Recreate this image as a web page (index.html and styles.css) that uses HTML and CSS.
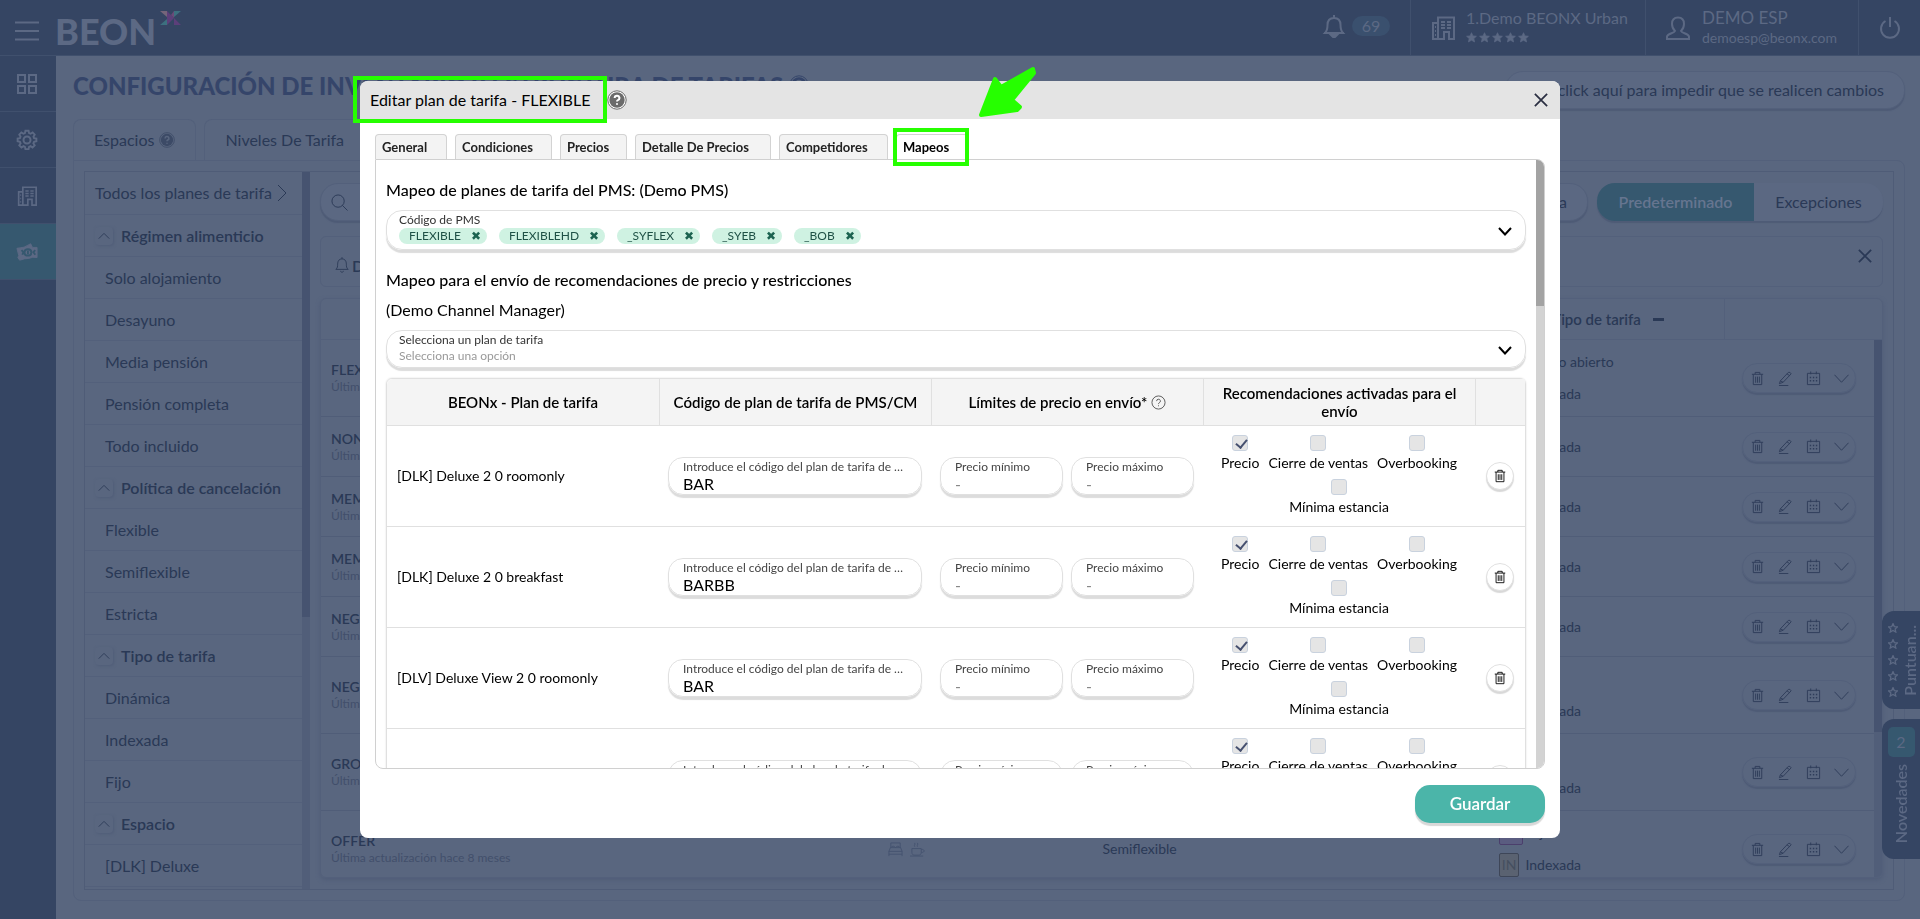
FILE: index.html
```html
<!DOCTYPE html>
<html lang="es">
<head>
<meta charset="utf-8">
<title>Editar plan de tarifa - FLEXIBLE</title>
<link rel="stylesheet" href="styles.css">
</head>
<body>
<svg class="sprite" aria-hidden="true">
  <symbol id="i-trash" viewBox="0 0 16 16"><path d="M2 3.5h12M5.5 3.500V1.500h5v2M3.500 3.500v11h9v-11M6 6v6.500M8 6v6.500M10 6v6.500"/></symbol>
  <symbol id="i-pen" viewBox="0 0 16 16"><path d="M2.500 10.500L11 1.500q2-.8 3 1.500L5.500 12 1.500 13.500zM2.500 10.500l3 1.500M9.500 3l3 2M1 15.500h10"/></symbol>
  <symbol id="i-cal" viewBox="0 0 16 16"><path d="M1.500 2.500h13v12h-13zM5 .5v3M11 .5v3"/><path d="M4 7h1.500M7.300 7h1.500M10.500 7H12M4 10.500h1.500M7.300 10.500h1.500M10.500 10.500H12" stroke-width="1.600"/></symbol>
  <symbol id="i-down" viewBox="0 0 16 16"><path d="M.5 4l7.500 8 7.500-8"/></symbol>
  <symbol id="i-up" viewBox="0 0 16 16"><path d="M2 11l6-6 6 6"/></symbol>
  <symbol id="i-right" viewBox="0 0 10 18"><path d="M1 1l8 8-8 8"/></symbol>
  <symbol id="i-close" viewBox="0 0 16 16"><path d="M1 1l14 14M15 1L1 15"/></symbol>
  <symbol id="i-hotel" viewBox="0 0 24 24"><path d="M7 23V1.500h16V23h-5v-7h-5v7zM7 7H2v16h5M4 11h1M4 15h1M4 19h1M10 6h4M16 6h4M10 9h4M16 9h4M10 12h4M16 12h4"/></symbol>
  <symbol id="i-star" viewBox="0 0 16 16"><path d="M8 1l2.100 4.700 5.100.5-3.800 3.400 1.100 5L8 12l-4.500 2.600 1.100-5L.8 6.200l5.100-.5z"/></symbol>
  <symbol id="i-help" viewBox="0 0 20 20"><circle class="help-ring" cx="10" cy="10" r="9.200"/><circle class="help-disc" cx="10" cy="10" r="7.700"/><path class="help-mark" d="M7.600 8a2.400 2.300 0 1 1 3.300 2.100c-.7.3-.9.700-.9 1.500M10 13.300v1.500"/></symbol>
</svg>

<header class="topbar">
  <button class="icon-button menu" aria-label="Menú"><svg viewBox="0 0 24 20"><path d="M0 1.500h24M0 10h24M0 18.500h24" stroke-width="2"/></svg></button>
  <div class="brand"><span>BEON</span>
    <svg class="brand-x" viewBox="0 0 21 14"><path fill="#75657a" d="M0 0h7v6z"/><path fill="#5c3f7a" d="M7 0l7 7-7 7zM14 7l7 7h-7z"/><path fill="#3c707f" d="M21 0l-7 6V0zM0 14l7-6v6z"/><path fill="#6b4a78" d="M14 0v7l-3-3z"/></svg>
  </div>
  <div class="top-group alerts">
    <svg class="line" viewBox="0 0 22 24"><path d="M2 19c2-2 2.500-4 2.500-8 0-4 2-7 6.500-7s6.500 3 6.500 7c0 4 .5 6 2.500 8zM11 4V1M1 19h20"/><path d="M8 21h6l-3 3z" fill="currentColor"/></svg>
    <span class="count">69</span>
  </div>
  <div class="top-group hotel">
    <svg class="line"><use href="#i-hotel"/></svg>
    <div><div class="top-name">1.Demo BEONX Urban</div>
      <div class="stars"><svg><use href="#i-star"/></svg><svg><use href="#i-star"/></svg><svg><use href="#i-star"/></svg><svg><use href="#i-star"/></svg><svg><use href="#i-star"/></svg></div></div>
  </div>
  <div class="top-group user">
    <svg class="line" viewBox="0 0 24 24"><path d="M9 15c-2-2-3-4-3-7 0-4 2-6.500 6-6.500S18 4 18 8c0 3-1 5-3 7 1 2.500 7 2 8 5.500V23H1v-2.500C2 17 8 17.500 9 15z"/></svg>
    <div><div class="top-name demo">DEMO ESP</div><div class="top-mail">demoesp@beonx.com</div></div>
  </div>
  <button class="icon-button top-group power" aria-label="Salir"><svg viewBox="0 0 22 22"><path d="M6.500 4a9 9 0 1 0 9 0M11 0v10"/></svg></button>
</header>

<div class="shell">
  <nav class="rail">
    <a href="#" aria-label="Panel"><svg viewBox="0 0 20 20"><path d="M1 1h7v7H1zM12 1h7v7h-7zM1 12h7v7H1zM12 12h7v7h-7z"/></svg></a>
    <a href="#" aria-label="Ajustes"><svg viewBox="0 0 20 20"><circle cx="10" cy="10" r="3.500"/><path d="M8.300 1h3.400l.5 2.500 1.600.7 2.200-1.400 2.200 2.400-1.300 2.100.6 1.500 2.500.5v2.900l-2.500.6-.7 1.600 1.400 2.100-2.300 2.300-2.100-1.400-1.600.7-.5 2.400H8.300l-.5-2.400-1.600-.7-2.100 1.400-2.300-2.300 1.400-2.100-.7-1.600L0 12.200V9.300l2.500-.5.600-1.500-1.300-2.100L4 2.800l2.200 1.400 1.600-.7z" transform="translate(.6 -.2) scale(.94)"/></svg></a>
    <a href="#" aria-label="Hotel"><svg><use href="#i-hotel"/></svg></a>
    <a href="#" class="active" aria-label="Tarifas"><svg viewBox="0 0 24 20"><path fill="currentColor" d="M1 6q8 0 15-5l2 4h5v11q-5-1-9 1-5 0-10 2l-2-3 1-2z"/><path class="cut" d="M13 7c-5 0-5 7 0 7s5-7 0-7zM13 8.500v4M6 8l2 2-1 3M21 8l-2 2 2 3"/></svg></a>
  </nav>

  <main class="page">
    <div class="page-head">
      <h1>CONFIGURACIÓN DE INVENTARIO Y ESTRUCTURA DE TARIFAS <svg class="help"><use href="#i-help"/></svg></h1>
      <button class="pill lock">Haz click aquí para impedir que se realicen cambios</button>
    </div>
    <div class="page-tabs">
      <button class="page-tab">Espacios <svg class="help"><use href="#i-help"/></svg></button>
      <button class="page-tab">Niveles De Tarifa</button>
    </div>
    <section class="board">
      <div class="board-inner">
        <aside class="tree">
          <ul>
            <li class="all">Todos los planes de tarifa <svg><use href="#i-right"/></svg></li>
            <li class="group"><span class="fold"><svg><use href="#i-up"/></svg></span>Régimen alimenticio</li>
            <li>Solo alojamiento</li><li>Desayuno</li><li>Media pensión</li><li>Pensión completa</li><li>Todo incluido</li>
            <li class="group"><span class="fold"><svg><use href="#i-up"/></svg></span>Política de cancelación</li>
            <li>Flexible</li><li>Semiflexible</li><li>Estricta</li>
            <li class="group"><span class="fold"><svg><use href="#i-up"/></svg></span>Tipo de tarifa</li>
            <li>Dinámica</li><li>Indexada</li><li>Fijo</li>
            <li class="group"><span class="fold"><svg><use href="#i-up"/></svg></span>Espacio</li>
            <li>[DLK] Deluxe</li><li></li>
          </ul>
          <div class="track"><div class="thumb tree-thumb"></div></div>
        </aside>
        <div class="plans">
          <div class="tools">
            <div class="pill search"><svg viewBox="0 0 18 18"><circle cx="7.500" cy="7.500" r="6.500"/><path d="M12 12l5.500 5.500"/></svg><input aria-label="Buscar" placeholder="Buscar"></div>
            <button class="pill add">Nueva tarifa</button>
            <div class="switch"><button class="on">Predeterminado</button><button>Excepciones</button></div>
          </div>
          <div class="notice"><span><svg class="bell" viewBox="0 0 16 18"><path d="M1 14c2-2 2-3 2-6 0-4 2-6 5-6s5 2 5 6c0 3 0 4 2 6zM8 2V0M6 16l2 1.500 2-1.500"/></svg>Derivadas</span><svg class="x"><use href="#i-close"/></svg></div>
          <div class="grid-box">
            <div class="grid-head"><span></span><span></span><span></span><span></span><span class="type-head">Tipo de tarifa <i></i></span><span class="last-head"></span></div>
            <div class="grid-body">
              <div class="grid-rows">
                <div class="plan tall"><div><b>FLEXIBLE</b><small>Última actualización</small></div><div></div><div></div><div></div><div class="types"><span><em class="fi">PA</em>Precio abierto</span><span><em>IN</em>Indexada</span></div><div class="acts"><svg><use href="#i-trash"/></svg><svg><use href="#i-pen"/></svg><svg><use href="#i-cal"/></svg><svg><use href="#i-down"/></svg></div></div>
                <div class="plan"><div><b>NON REF</b><small>Última actualización</small></div><div></div><div></div><div></div><div class="types"><span><em>IN</em>Indexada</span></div><div class="acts"><svg><use href="#i-trash"/></svg><svg><use href="#i-pen"/></svg><svg><use href="#i-cal"/></svg><svg><use href="#i-down"/></svg></div></div>
                <div class="plan"><div><b>MEMBER</b><small>Última actualización</small></div><div></div><div></div><div></div><div class="types"><span><em>IN</em>Indexada</span></div><div class="acts"><svg><use href="#i-trash"/></svg><svg><use href="#i-pen"/></svg><svg><use href="#i-cal"/></svg><svg><use href="#i-down"/></svg></div></div>
                <div class="plan"><div><b>MEMBER</b><small>Última actualización</small></div><div></div><div></div><div></div><div class="types"><span><em>IN</em>Indexada</span></div><div class="acts"><svg><use href="#i-trash"/></svg><svg><use href="#i-pen"/></svg><svg><use href="#i-cal"/></svg><svg><use href="#i-down"/></svg></div></div>
                <div class="plan"><div><b>NEGO</b><small>Última actualización</small></div><div></div><div></div><div></div><div class="types"><span><em>IN</em>Indexada</span></div><div class="acts"><svg><use href="#i-trash"/></svg><svg><use href="#i-pen"/></svg><svg><use href="#i-cal"/></svg><svg><use href="#i-down"/></svg></div></div>
                <div class="plan tall"><div><b>NEGO</b><small>Última actualización</small></div><div></div><div></div><div></div><div class="types"><span></span><span><em>IN</em>Indexada</span></div><div class="acts"><svg><use href="#i-trash"/></svg><svg><use href="#i-pen"/></svg><svg><use href="#i-cal"/></svg><svg><use href="#i-down"/></svg></div></div>
                <div class="plan tall"><div><b>GROUP</b><small>Última actualización</small></div><div></div><div></div><div></div><div class="types"><span></span><span><em>IN</em>Indexada</span></div><div class="acts"><svg><use href="#i-trash"/></svg><svg><use href="#i-pen"/></svg><svg><use href="#i-cal"/></svg><svg><use href="#i-down"/></svg></div></div>
                <div class="plan tall"><div><b>OFFER</b><small>Última actualización hace 8 meses</small></div>
                  <div class="meal"><svg viewBox="0 0 16 16"><path d="M3 6V1h10v5M3 6c1-2 4-2 5 0 1-2 4-2 5 0M2.500 6L1 10v5M13.500 6l1.500 4v5M1 10h14M1 13h14M2.500 6h11"/></svg><svg viewBox="0 0 16 16"><path d="M2 7h10v4c0 2-1 3-3 3H5c-2 0-3-1-3-3zM12 8c4-1 4 4 0 3M0 15h14M5 5c-1-2 1-2 0-4M8 5c-1-2 1-2 0-4"/></svg></div>
                  <div class="center">Semiflexible</div><div></div><div class="types"><span><em class="fi">FIJ</em>Fijo</span><span><em>IN</em>Indexada</span></div><div class="acts"><svg><use href="#i-trash"/></svg><svg><use href="#i-pen"/></svg><svg><use href="#i-cal"/></svg><svg><use href="#i-down"/></svg></div></div>
              </div>
              <div class="track"><div class="thumb grid-thumb"></div></div>
            </div>
          </div>
        </div>
      </div>
    </section>
  </main>
</div>

<div class="side-tabs">
  <button class="side-tab rate"><span class="side-stars"><svg><use href="#i-star"/></svg><svg><use href="#i-star"/></svg><svg><use href="#i-star"/></svg><svg><use href="#i-star"/></svg><svg><use href="#i-star"/></svg></span><span class="vertical">Puntuan...</span></button>
  <button class="side-tab news"><span class="news-count">2</span><span class="vertical">Novedades</span></button>
</div>

<div class="backdrop">
  <div class="dialog" role="dialog" aria-labelledby="dialog-title">
    <div class="dialog-head"><h2 id="dialog-title">Editar plan de tarifa - FLEXIBLE</h2><svg class="help"><use href="#i-help"/></svg><button class="icon-button close" aria-label="Cerrar"><svg><use href="#i-close"/></svg></button></div>
    <div class="dialog-body">
      <div class="tabs" role="tablist">
        <button class="tab t-general" role="tab">General</button><button class="tab t-cond" role="tab">Condiciones</button><button class="tab t-prec" role="tab">Precios</button><button class="tab t-det" role="tab">Detalle De Precios</button><button class="tab t-comp" role="tab">Competidores</button><button class="tab t-map selected" role="tab" aria-selected="true">Mapeos</button>
      </div>
      <div class="panel">
        <div class="panel-scroll">
          <h3>Mapeo de planes de tarifa del PMS: (Demo PMS)</h3>
          <div class="field pms">
            <div class="field-main"><span class="field-label">Código de PMS</span>
              <div class="chips"><span class="chip">FLEXIBLE<button aria-label="Quitar FLEXIBLE">✖</button></span><span class="chip">FLEXIBLEHD<button aria-label="Quitar FLEXIBLEHD">✖</button></span><span class="chip">_SYFLEX<button aria-label="Quitar _SYFLEX">✖</button></span><span class="chip">_SYEB<button aria-label="Quitar _SYEB">✖</button></span><span class="chip">_BOB<button aria-label="Quitar _BOB">✖</button></span></div></div>
            <svg class="chev" viewBox="0 0 14 9"><path d="M1 1l6 6.500L13 1"/></svg>
          </div>
          <h3 class="second">Mapeo para el envío de recomendaciones de precio y restricciones</h3>
          <p>(Demo Channel Manager)</p>
          <div class="field plan-select">
            <div class="field-main"><label class="field-label" for="plan">Selecciona un plan de tarifa</label>
              <select id="plan"><option>Selecciona una opción</option></select></div>
            <svg class="chev" viewBox="0 0 14 9"><path d="M1 1l6 6.500L13 1"/></svg>
          </div>
          <table class="rates">
            <colgroup><col><col><col><col><col class="c-del"></colgroup>
            <thead><tr><th>BEONx - Plan de tarifa</th><th>Código de plan de tarifa de PMS/CM</th><th><span class="th-help">Límites de precio en envío* <svg viewBox="0 0 16 16"><circle cx="8" cy="8" r="7"/><path d="M6 6.500a2 2 0 1 1 2.800 1.800c-.6.300-.8.700-.8 1.400M8 11v1"/></svg></span></th><th>Recomendaciones activadas para el envío</th><th></th></tr></thead>
            <tbody>
              <tr><td>[DLK] Deluxe 2 0 roomonly</td>
                <td><label class="box"><span>Introduce el código del plan de tarifa de PMS/CM</span><input value="BAR"></label></td>
                <td><div class="pair"><label class="box"><span>Precio mínimo</span><input placeholder="-"></label><label class="box"><span>Precio máximo</span><input placeholder="-"></label></div></td>
                <td><div class="checks"><label><input type="checkbox" checked disabled>Precio</label><label><input type="checkbox" disabled>Cierre de ventas</label><label><input type="checkbox" disabled>Overbooking</label><label><input type="checkbox" disabled>Mínima estancia</label></div></td>
                <td><button class="round" aria-label="Eliminar"><svg><use href="#i-trash"/></svg></button></td></tr>
              <tr><td>[DLK] Deluxe 2 0 breakfast</td>
                <td><label class="box"><span>Introduce el código del plan de tarifa de PMS/CM</span><input value="BARBB"></label></td>
                <td><div class="pair"><label class="box"><span>Precio mínimo</span><input placeholder="-"></label><label class="box"><span>Precio máximo</span><input placeholder="-"></label></div></td>
                <td><div class="checks"><label><input type="checkbox" checked disabled>Precio</label><label><input type="checkbox" disabled>Cierre de ventas</label><label><input type="checkbox" disabled>Overbooking</label><label><input type="checkbox" disabled>Mínima estancia</label></div></td>
                <td><button class="round" aria-label="Eliminar"><svg><use href="#i-trash"/></svg></button></td></tr>
              <tr><td>[DLV] Deluxe View 2 0 roomonly</td>
                <td><label class="box"><span>Introduce el código del plan de tarifa de PMS/CM</span><input value="BAR"></label></td>
                <td><div class="pair"><label class="box"><span>Precio mínimo</span><input placeholder="-"></label><label class="box"><span>Precio máximo</span><input placeholder="-"></label></div></td>
                <td><div class="checks"><label><input type="checkbox" checked disabled>Precio</label><label><input type="checkbox" disabled>Cierre de ventas</label><label><input type="checkbox" disabled>Overbooking</label><label><input type="checkbox" disabled>Mínima estancia</label></div></td>
                <td><button class="round" aria-label="Eliminar"><svg><use href="#i-trash"/></svg></button></td></tr>
              <tr><td></td>
                <td><label class="box"><span>Introduce el código del plan de tarifa de PMS/CM</span><input></label></td>
                <td><div class="pair"><label class="box"><span>Precio mínimo</span><input></label><label class="box"><span>Precio máximo</span><input></label></div></td>
                <td><div class="checks"><label><input type="checkbox" checked disabled>Precio</label><label><input type="checkbox" disabled>Cierre de ventas</label><label><input type="checkbox" disabled>Overbooking</label><label><input type="checkbox" disabled>Mínima estancia</label></div></td>
                <td><button class="round" aria-label="Eliminar"><svg><use href="#i-trash"/></svg></button></td></tr>
            </tbody>
          </table>
        </div>
        <div class="track light"><div class="thumb panel-thumb"></div></div>
      </div>
      <div class="dialog-foot"><button class="save">Guardar</button></div>
    </div>
    <div class="mark mark-title"></div>
    <div class="mark mark-tab"></div>
    <svg class="arrow" viewBox="0 0 60 54"><path d="M3 49L17 13l6 8L55 3l1 4-22 27 8 7-3 3z"/></svg>
  </div>
</div>
</body>
</html>
```

FILE: styles.css
```css
* { box-sizing: border-box; }
body {
  margin: 0;
  height: 100vh;
  overflow: hidden;
  display: flex;
  flex-direction: column;
  background: #59667f;
  color: #2a3956;
  font: 16px/20px Lato, "Noto Sans", sans-serif;
}
button, input, select { font: inherit; color: inherit; }
button { cursor: pointer; }
h1, h2, h3, p, ul { margin: 0; padding: 0; }
ul { list-style: none; }
svg { fill: none; stroke: currentColor; flex: none; }
.sprite { position: absolute; width: 0; height: 0; }
.icon-button { border: 0; background: none; padding: 0; display: flex; align-items: center; justify-content: center; }
.help-ring { stroke: currentColor; stroke-width: 1; fill: var(--mark, none); }
.help-disc { fill: currentColor; stroke: none; }
.help-mark { stroke: var(--mark, #59667f); stroke-width: 2; }

/* top bar */
.topbar { flex: none; display: flex; height: 56px; background: #354563; color: #5c6984; border-bottom: 1px solid #40506d; }
.menu { width: 54px; padding: 6px 0 0; }
.menu svg { width: 24px; height: 20px; }
.brand { display: flex; flex: 1; padding: 11px 0 0 1px; gap: 4px; font-weight: 900; font-size: 36px; line-height: 40px; }
.brand-x { width: 21px; height: 14px; stroke: none; }
.top-group { display: flex; align-items: center; border-left: 1px solid #40506d; }
.top-group .line { width: 24px; height: 24px; stroke-width: 2; }
.alerts { border: 0; gap: 6px; width: 88px; padding-bottom: 4px; }
.count { background: #3a506e; border-radius: 10px; width: 38px; text-align: center; }
.hotel { width: 235px; padding-left: 20px; gap: 11px; }
.user { width: 213px; padding-left: 20px; gap: 12px; }
.top-name { font-size: 16px; line-height: 20px; white-space: nowrap; }
.top-name.demo { font-size: 17px; }
.top-mail { font-size: 14px; line-height: 20px; }
.stars { display: flex; gap: 2px; height: 20px; align-items: center; }
.stars svg { width: 11px; height: 11px; fill: currentColor; }
.power { width: 62px; border-width: 0 0 0 1px; color: #5c6984; }
.power svg { width: 22px; height: 22px; stroke-width: 2; }

/* left rail */
.shell { flex: 1; min-height: 0; display: flex; }
.rail { width: 56px; background: #354563; color: #5c6984; flex: none; }
.rail a { display: flex; align-items: center; justify-content: center; height: 56px; padding-right: 2px; color: inherit; border-bottom: 1px solid #40506d; }
.rail a svg { width: 20px; height: 20px; stroke-width: 2; overflow: visible; }
.rail .active { background: #36586f; }
.rail .active svg { width: 22px; stroke-width: 1; }
.rail .cut { stroke: #36586f; stroke-width: 2; }

/* page */
.page { flex: 1; min-width: 0; display: flex; flex-direction: column; padding: 15px 15px 18px 17px; }
.page-head { display: flex; justify-content: space-between; align-items: flex-start; height: 48px; }
h1 { font-size: 24px; line-height: 30px; font-weight: 900; color: #35456a; white-space: nowrap; }
h1 .help { width: 20px; height: 20px; }
.pill { border: 1px solid #53607b; border-radius: 18px; background: #5b6882; box-shadow: 0 2px 1px #4e5b76; height: 38px; }
.lock { padding: 0 20px; white-space: nowrap; }
.page-tabs { display: flex; gap: 8px; }
.page-tab { height: 41px; padding: 0 20px; display: flex; gap: 5px; align-items: center; background: none; border: 1px solid #53607b; border-bottom: 0; border-radius: 8px 8px 0 0; }
.page-tab .help { width: 16px; height: 16px; color: #3c4a66; }
.board { flex: 1; min-height: 0; border: 1px solid #53607b; border-radius: 0 8px 8px 8px; padding: 10px; }
.board-inner { height: 100%; display: flex; border: 1px solid #4f5c77; }
.tree { display: flex; width: 225px; overflow: hidden; flex: none; }
.tree ul { flex: 1; }
.tree li { height: 42px; display: flex; align-items: center; padding-left: 20px; border-bottom: 1px solid #53607b; white-space: nowrap; }
.tree .all { height: 43px; padding-left: 10px; gap: 5px; }
.all svg { width: 10px; height: 18px; }
.tree .group { padding-left: 10px; gap: 8px; font-weight: 600; }
.fold { width: 18px; height: 18px; display: flex; align-items: center; justify-content: center; border-radius: 4px; box-shadow: 1px 1px 3px #505d78; }
.fold svg { width: 14px; height: 14px; }
.track { width: 8px; background: #515e79; flex: none; }
.thumb { background: #465370; }
.tree-thumb { height: 62%; }
.plans { flex: 1; min-width: 0; display: flex; flex-direction: column; padding: 11px 10px; }
.tools { display: flex; gap: 9px; }
.search { width: 260px; display: flex; align-items: center; gap: 11px; padding-left: 10px; margin-right: auto; }
.search svg { width: 17px; height: 17px; }
.search input { border: 0; background: none; width: 180px; outline: 0; }
.search input::placeholder { color: #3f4d69; }
.add { padding: 0 20px; }
.switch { display: flex; border-radius: 18px; overflow: hidden; box-shadow: 0 2px 1px #4e5b76; height: 38px; }
.switch button { border: 0; background: #5b6882; width: 129px; padding: 0; }
.switch .on { background: #36586f; color: #667590; width: 157px; font-weight: 600; }
.notice { display: flex; justify-content: space-between; height: 51px; margin: 15px 0 11px; border: 1px solid #53607b; border-radius: 6px; padding: 12px 10px 0 14px; }
.notice span { display: flex; gap: 3px; padding-top: 7px; font-weight: 600; }
.bell { width: 14px; height: 18px; }
.notice .x { width: 14px; height: 14px; stroke-width: 2; }
.grid-box { flex: 1; min-height: 0; display: flex; flex-direction: column; border: 1px solid #53607b; border-radius: 6px; box-shadow: 0 2px 4px #505d78; overflow: hidden; }
.grid-head { display: grid; grid-template-columns: 450fr 270fr 198fr 250fr 236fr 158px; height: 41px; flex: none; border-bottom: 1px solid #53607b; }
.type-head { display: flex; align-items: center; justify-content: center; gap: 12px; font-size: 15px; font-weight: 600; padding-left: 4px; }
.type-head i { width: 11px; height: 3px; background: #2a3956; }
.last-head { border-left: 1px solid #53607b; }
.grid-body { flex: 1; min-height: 0; display: flex; }
.grid-rows { flex: 1; overflow: hidden; }
.plan { display: grid; grid-template-columns: 450fr 270fr 198fr 250fr 236fr 150px; align-items: center; height: 60px; border-bottom: 1px solid #505d78; padding-left: 10px; font-size: 14px; }
.plan.tall { height: 77px; }
.plan b { display: block; font-weight: 600; line-height: 18px; }
.plan small { display: block; font-size: 12px; line-height: 16px; color: #424f6b; }
.meal { display: flex; justify-content: center; gap: 7px; padding-right: 10px; color: #455370; }
.meal svg { width: 15px; height: 15px; }
.center { text-align: center; padding-right: 8px; }
.types { padding-left: 9px; display: grid; gap: 8px; }
.types span { display: flex; gap: 6px; align-items: center; height: 24px; }
.types em { font-style: normal; border: 1px solid #3e4658; background: #5a6271; color: #454f5f; border-radius: 2px; padding: 1px 2px; }
.types .fi { background: #5a5c80; border-color: #4b3f6c; }
.acts { display: grid; grid-template-columns: repeat(4, 28px); justify-self: start; margin-left: 18px; height: 30px; border-radius: 15px; border: 1px solid #53607b; box-shadow: 0 2px 1px #4e5b76; align-items: center; justify-items: center; color: #2f3d5a; }
.acts svg { width: 15px; height: 15px; }
.grid-thumb { height: 73%; }

/* side tabs */
.side-tabs { position: fixed; right: 0; top: 611px; display: grid; gap: 10px; }
.side-tab { width: 38px; border: 0; border-radius: 12px 0 0 12px; background: #354563; color: #5c6984; display: flex; align-items: center; padding: 0; }
.rate { height: 98px; gap: 3px; padding-left: 6px; }
.side-stars { display: flex; flex-direction: column; gap: 6px; }
.side-stars svg { width: 10px; height: 10px; stroke-width: 2; }
.vertical { writing-mode: vertical-rl; transform: rotate(180deg); font-weight: 600; line-height: 18px; }
.news { height: 140px; flex-direction: column; padding-top: 8px; gap: 7px; }
.news-count { width: 27px; height: 30px; line-height: 30px; border-radius: 5px; background: #36586f; }

/* dialog */
.backdrop { position: fixed; inset: 0; display: flex; justify-content: center; padding: 81px 0; }
.dialog { position: relative; width: 1200px; max-width: 100%; background: #fff; color: #000; border-radius: 8px; display: flex; flex-direction: column; }
.dialog-head { flex: none; display: flex; align-items: center; height: 38px; padding: 0 12px 0 10px; gap: 17px; background: #e4e4e4; border-radius: 8px 8px 0 0; }
.dialog-head h2 { font-size: 16px; font-weight: 400; }
.dialog-head .help { width: 20px; height: 20px; color: #6b6b6b; --mark: #fff; }
.close { margin-left: auto; color: #2b2f42; }
.close svg { width: 14px; height: 14px; stroke-width: 2; }
.dialog-body { flex: 1; min-height: 0; display: flex; flex-direction: column; padding: 15px 15px 12px; }
.tabs { display: flex; gap: 8px; height: 25px; flex: none; }
.tab { border: 1px solid #d3d3d3; border-bottom: 0; border-radius: 4px 4px 0 0; background: #f3f3f3; font-size: 13px; font-weight: 700; text-align: left; padding: 0 0 0 6px; color: #222; white-space: nowrap; }
.t-general { width: 72px; } .t-cond { width: 97px; } .t-prec { width: 67px; } .t-det { width: 136px; } .t-comp { width: 109px; } .t-map { width: 72px; }
.tab.selected { background: #fff; color: #000; }
.panel { flex: 1; min-height: 0; display: flex; border: 1px solid #d0d0d0; border-radius: 0 8px 8px 8px; overflow: hidden; }
.panel-scroll { flex: 1; min-width: 0; overflow: hidden; padding: 20px 10px 0; }
.track.light { background: #d3d3d3; }
.panel-thumb { background: #a3a3a3; height: 24%; }
h3 { font-size: 16px; font-weight: 500; line-height: 20px; }
h3.second { margin: 20px 0 10px; }
.field { display: flex; align-items: center; border: 1px solid #e0e0e0; border-radius: 16px; box-shadow: 0 3px 1px #dcdcdc; padding: 0 13px 0 12px; }
.pms { height: 40px; margin-top: 10px; }
.plan-select { height: 38px; margin: 10px 0; }
.field-main { flex: 1; padding-bottom: 2px; }
.field-label { display: block; font-size: 12px; line-height: 16px; color: #333; }
.field select { appearance: none; display: block; width: 100%; border: 0; background: none; padding: 0; font-size: 12px; line-height: 16px; color: #999; outline: 0; }
.chev { width: 14px; height: 9px; margin-top: 3px; stroke-width: 2; }
.chips { display: flex; gap: 12px; }
.chip { display: flex; align-items: center; gap: 10px; height: 16px; border-radius: 8px; background: #cff2e2; color: #1f5146; font-size: 12px; padding: 0 6px 0 10px; }
.chip button { border: 0; background: none; padding: 0; line-height: 16px; color: #1c6350; font-size: 12px; }
.pms .field-main { padding-bottom: 4px; }
.rates { width: 100%; table-layout: fixed; border-collapse: separate; border-spacing: 0; border: 1px solid #e0e0e0; border-radius: 6px 6px 0 0; box-shadow: 0 0 2px #ddd; }
.c-del { width: 50px; }
.rates th { background: #f4f4f4; height: 47px; padding: 0 8px; font-size: 15px; line-height: 18px; font-weight: 600; border-bottom: 1px solid #e0e0e0; border-left: 1px solid #e0e0e0; }
.rates th:first-child { border-left: 0; border-radius: 6px 0 0 0; }
.th-help { display: flex; gap: 4px; align-items: center; justify-content: center; }
.th-help svg { width: 15px; height: 15px; color: #555; }
.rates td { height: 101px; padding: 0 9px; font-size: 14px; border-bottom: 1px solid #e0e0e0; }
.rates td:first-child { padding-left: 10px; }
.rates td:last-child { padding: 0 0 0 11px; }
.box { display: block; height: 38px; border: 1px solid #e0e0e0; border-radius: 15px; box-shadow: 0 3px 1px #dcdcdc; padding: 1px 14px; min-width: 0; }
.box span { display: block; font-size: 12px; line-height: 16px; color: #444; overflow: hidden; white-space: nowrap; text-overflow: ellipsis; }
.box input { display: block; width: 100%; border: 0; background: none; outline: 0; padding: 0; font-size: 16px; line-height: 16px; height: 16px; }
.box input::placeholder { color: #888; }
.pair { display: grid; grid-template-columns: 1fr 1fr; gap: 8px; }
.checks { display: flex; flex-wrap: wrap; justify-content: center; gap: 6px 9px; }
.checks label { display: flex; flex-direction: column; align-items: center; gap: 2px; white-space: nowrap; }
.checks input { appearance: none; position: relative; width: 16px; height: 16px; margin: 0; background: #e5e5e5; border: 1px solid #c9d2de; border-radius: 3px; }
.checks input:checked::after { content: ""; position: absolute; left: 5px; top: 1px; width: 5px; height: 9px; border: solid #46506f; border-width: 0 2px 2px 0; transform: rotate(40deg); }
.round { display: flex; align-items: center; justify-content: center; width: 28px; height: 28px; padding: 0; background: #fff; border: 1px solid #e0e0e0; border-radius: 14px; box-shadow: 0 2px 1px #d8d8d8; }
.round svg { width: 14px; height: 14px; }
.dialog-foot { flex: none; display: flex; justify-content: flex-end; padding: 16px 0 3px; }
.save { width: 130px; height: 38px; border: 0; border-radius: 15px; background: #4bb5a9; color: #fff; font-size: 17px; font-weight: 600; box-shadow: 0 3px 1px #d8d8d8; }
.mark { position: absolute; border: 4px solid #26ff00; pointer-events: none; }
.mark-title { left: -7px; top: -5px; width: 254px; height: 47px; }
.mark-tab { left: 533px; top: 47px; width: 76px; height: 38px; }
.arrow { position: absolute; left: 618px; top: -15px; width: 60px; height: 54px; fill: #26ff00; stroke: #26ff00; stroke-width: 4; stroke-linejoin: round; }
```
